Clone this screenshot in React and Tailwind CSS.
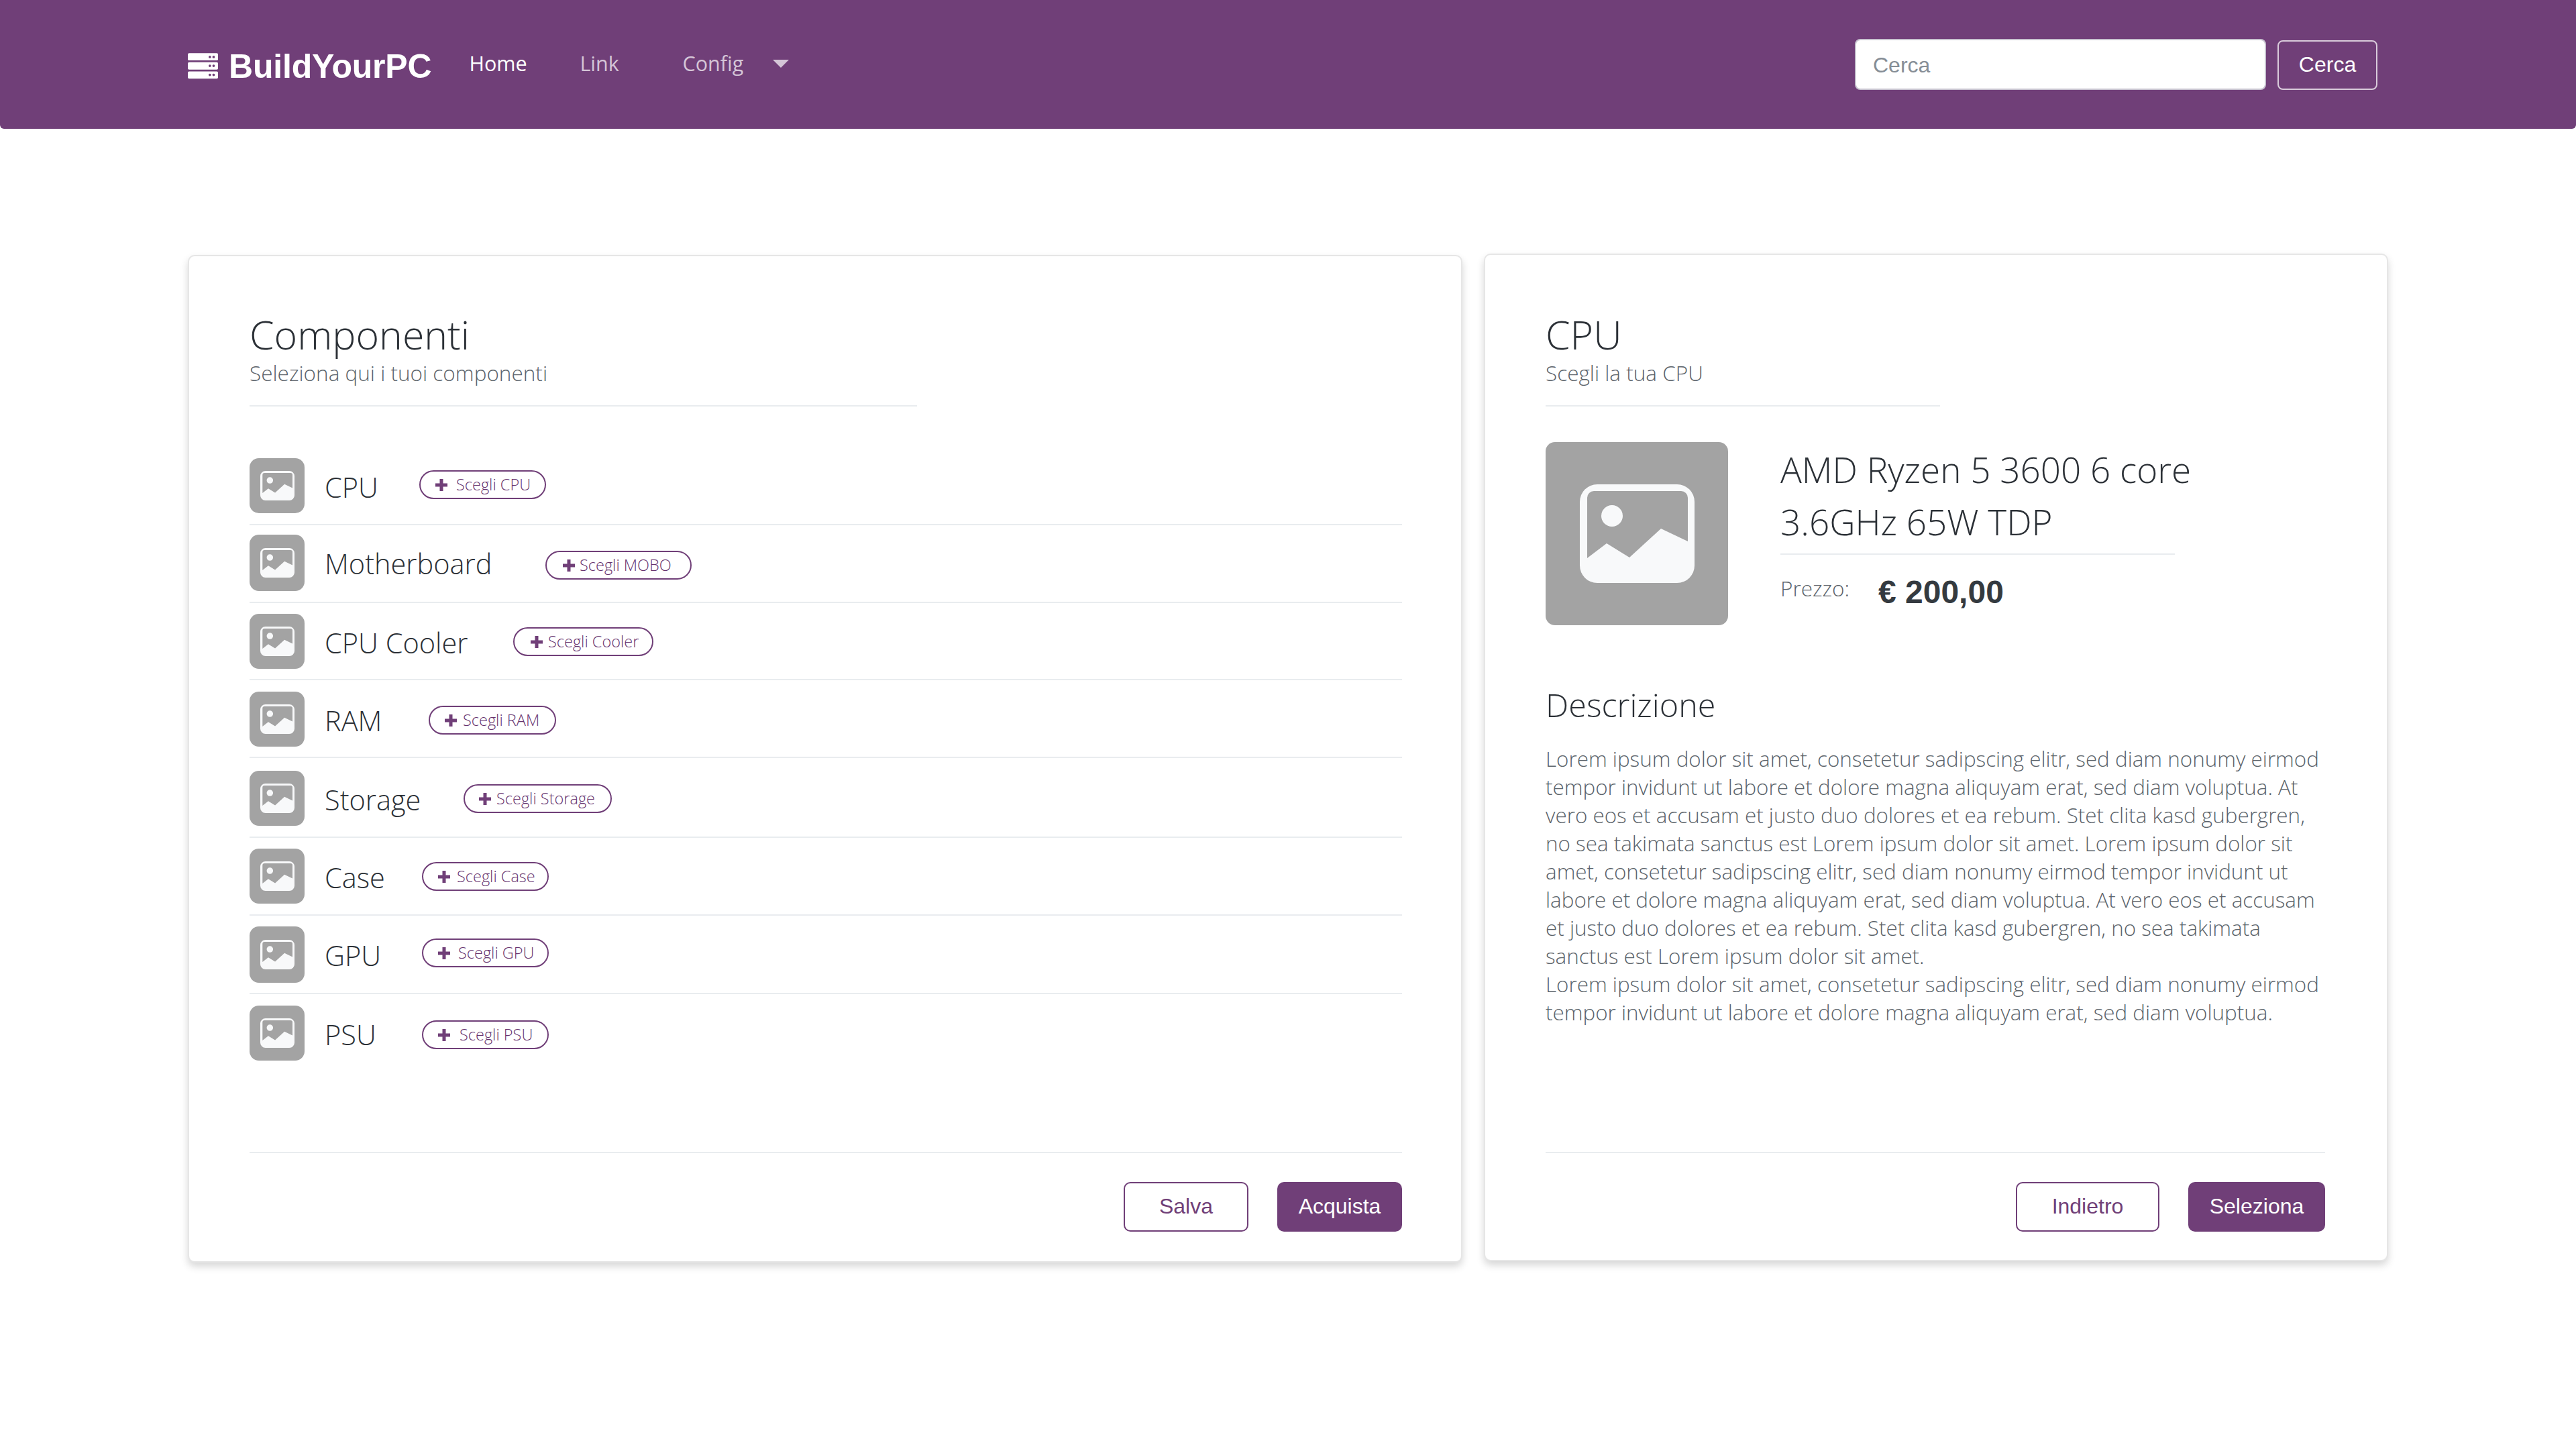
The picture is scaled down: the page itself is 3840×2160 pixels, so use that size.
const sans = "font-['Open_Sans',sans-serif]";
const arial = "font-['Liberation_Sans',sans-serif]";

function Pic({ className }) {
  return (
    <svg viewBox="0 0 171 147" className={className}>
      <path
        fill="#f8f9fa"
        fillRule="evenodd"
        d="M26 0H145A26 26 0 0 1 171 26V121A26 26 0 0 1 145 147H26A26 26 0 0 1 0 121V26A26 26 0 0 1 26 0ZM21 10A10 10 0 0 0 11 20V110L40 88L74 109L121 66L161 85V20A10 10 0 0 0 151 10Z"
      />
      <ellipse cx="48" cy="47" rx="16" ry="16" fill="#f8f9fa" />
    </svg>
  );
}

const rows = [
  { n: "CPU", b: "Scegli CPU", nw: "w-[141px]", bw: "w-[189px]", box: "h-[100px] mb-[14px]", th: "h-[82px]", bt: "mt-[18px]", pl: "pl-[21px]", g: "gap-[12px]" },
  { n: "Motherboard", b: "Scegli MOBO", nw: "w-[329px]", bw: "w-[218px]", box: "h-[102px] mb-[16px]", th: "h-[84px]", bt: "mt-[24px]", pl: "pl-[23px]", g: "gap-[6px]" },
  { n: "CPU Cooler", b: "Scegli Cooler", nw: "w-[281px]", bw: "w-[209px]", box: "h-[99px] mb-[17px]", th: "h-[82px]", bt: "mt-[20px]", pl: "pl-[23px]", g: "gap-[7px]" },
  { n: "RAM", b: "Scegli RAM", nw: "w-[155px]", bw: "w-[190px]", box: "h-[99px] mb-[19px]", th: "h-[82px]", bt: "mt-[21px]", pl: "pl-[21px]", g: "gap-[8px]" },
  { n: "Storage", b: "Scegli Storage", nw: "w-[207px]", bw: "w-[221px]", box: "h-[100px] mb-[16px]", th: "h-[82px]", bt: "mt-[20px]", pl: "pl-[20px]", g: "gap-[7px]" },
  { n: "Case", b: "Scegli Case", nw: "w-[145px]", bw: "w-[189px]", box: "h-[100px] mb-[16px]", th: "h-[82px]", bt: "mt-[20px]", pl: "pl-[21px]", g: "gap-[9px]" },
  { n: "GPU", b: "Scegli GPU", nw: "w-[145px]", bw: "w-[189px]", box: "h-[101px] mb-[17px]", th: "h-[84px]", bt: "mt-[18px]", pl: "pl-[21px]", g: "gap-[11px]" },
  { n: "PSU", b: "Scegli PSU", nw: "w-[145px]", bw: "w-[189px]", box: "h-[82px]", th: "h-[82px]", bt: "mt-[22px]", pl: "pl-[21px]", g: "gap-[13px]" },
];

const lines = [
  "Lorem ipsum dolor sit amet, consetetur sadipscing elitr, sed diam nonumy eirmod",
  "tempor invidunt ut labore et dolore magna aliquyam erat, sed diam voluptua. At",
  "vero eos et accusam et justo duo dolores et ea rebum. Stet clita kasd gubergren,",
  "no sea takimata sanctus est Lorem ipsum dolor sit amet. Lorem ipsum dolor sit",
  "amet, consetetur sadipscing elitr, sed diam nonumy eirmod tempor invidunt ut",
  "labore et dolore magna aliquyam erat, sed diam voluptua. At vero eos et accusam",
  "et justo duo dolores et ea rebum. Stet clita kasd gubergren, no sea takimata",
  "sanctus est Lorem ipsum dolor sit amet.",
  "Lorem ipsum dolor sit amet, consetetur sadipscing elitr, sed diam nonumy eirmod",
  "tempor invidunt ut labore et dolore magna aliquyam erat, sed diam voluptua.",
];

function Footer({ a, b, aw, bw }) {
  return (
    <div className="mt-auto border-t-[2px] border-[#e9ecef] pt-[43px] flex justify-end gap-[43px]">
      <button className={`${arial} ${aw} h-[74px] pb-[2px] rounded-[10px] border-[2px] border-[#703f78] text-[#703f78] text-[32px] bg-white`}>{a}</button>
      <button className={`${arial} ${bw} h-[74px] pb-[2px] rounded-[10px] bg-[#703f78] text-white text-[32px]`}>{b}</button>
    </div>
  );
}

export default function App() {
  return (
    <div className={`min-h-[2160px] bg-white ${sans}`}>
      <nav className="h-[192px] bg-[#703f78] rounded-b-[6px] flex items-center pl-[280px] pr-[296px]">
        <svg viewBox="0 0 48 40" className="w-[45px] h-[40px] mt-[4px]">
          <g fill="#fff">
            <rect x="0" y="0" width="48" height="11.5" rx="2" />
            <rect x="0" y="14.5" width="48" height="11.5" rx="2" />
            <rect x="0" y="29" width="48" height="11.5" rx="2" />
          </g>
          <g fill="#703f78">
            <circle cx="35" cy="6" r="2" /><circle cx="41" cy="6" r="2" />
            <circle cx="35" cy="20" r="2" /><circle cx="41" cy="20" r="2" />
            <circle cx="35" cy="34.5" r="2" /><circle cx="41" cy="34.5" r="2" />
          </g>
        </svg>
        <span className={`${arial} ml-[16px] text-[50px] font-bold text-white leading-none mt-[6px] tracking-[-0.2px]`}>BuildYourPC</span>
        <div className="ml-[56px] flex items-center text-[30.5px] font-normal mb-[2px]">
          <span className="text-white w-[165px]">Home</span>
          <span className="text-[#d4c5d7] w-[153px]">Link</span>
          <span className="text-[#d4c5d7]">Config</span>
          <span className="ml-[44px] w-0 h-0 border-x-[12px] border-x-transparent border-t-[12px] border-t-[#d4c5d7]"></span>
        </div>
        <div className="ml-auto flex items-end gap-[17px]">
          <div className={`${arial} w-[613px] h-[76px] bg-white rounded-[8px] border-[2px] border-[#c8c4d0] pl-[25px] pt-[2px] flex items-center text-[32px] text-[#868e96]`}>Cerca</div>
          <button className={`${arial} w-[149px] h-[74px] pb-[2px] rounded-[8px] border-[2px] border-[#d9ccdb] text-white text-[32px]`}>Cerca</button>
        </div>
      </nav>

      <main className="pl-[280px] pt-[186px] flex items-start gap-[32px]">
        <section className="w-[1900px] h-[1502px] mt-[2px] rounded-[10px] border-[2px] border-[#e6e6e6] bg-white shadow-[0_6px_12px_rgba(0,0,0,0.16)] pt-[79px] pl-[90px] pr-[88px] pb-[44px] flex flex-col">
          <h1 className="text-[59px] font-light leading-[74px] text-[#2b3036]">Componenti</h1>
          <p className="text-[31.5px] leading-[42px] font-light text-[#5c646b] border-b-[2px] border-[#e9ecef] w-[995px] pb-[27px]">Seleziona qui i tuoi componenti</p>
          <div className="mt-[77px]">
            {rows.map((r, i) => (
              <div key={r.n} className={`${r.box} flex items-start ${i < 7 ? "border-b-[2px] border-[#e9ecef]" : ""}`}>
                <div className={`w-[82px] ${r.th} rounded-[14px] bg-[#a3a3a3] flex items-center justify-center shrink-0`}>
                  <Pic className="w-[51px] h-[44px]" />
                </div>
                <span className={`ml-[30px] ${r.nw} shrink-0 text-[41.5px] font-light leading-[86px] text-[#2b3036]`}>{r.n}</span>
                <span className={`${r.bw} ${r.bt} ${r.pl} ${r.g} h-[43px] rounded-full border-[2px] border-[#703f78] flex items-center text-[#66336e] text-[23.5px] font-light`}>
                  <svg viewBox="0 0 20 20" className="w-[20px] h-[20px] shrink-0">
                    <path d="M10 1V19M1 10H19" stroke="#703f78" strokeWidth="5" fill="none" />
                  </svg>
                  <span className="whitespace-nowrap">{r.b}</span>
                </span>
              </div>
            ))}
          </div>
          <Footer a="Salva" b="Acquista" aw="w-[186px]" bw="w-[186px]" />
        </section>

        <section className="w-[1348px] h-[1502px] rounded-[10px] border-[2px] border-[#e6e6e6] bg-white shadow-[0_6px_12px_rgba(0,0,0,0.16)] pt-[81px] pl-[90px] pr-[92px] pb-[42px] flex flex-col">
          <h1 className="text-[59px] font-light leading-[74px] text-[#2b3036]">CPU</h1>
          <p className="text-[31.5px] leading-[42px] font-light text-[#5c646b] border-b-[2px] border-[#e9ecef] w-[588px] pb-[27px]">Scegli la tua CPU</p>
          <div className="mt-[53px] flex">
            <div className="w-[272px] h-[273px] rounded-[14px] bg-[#a3a3a3] flex items-center justify-center">
              <Pic className="w-[171px] h-[147px]" />
            </div>
            <div className="ml-[78px] w-[800px]">
              <div className="text-[53px] font-light leading-[78px] text-[#2b3036] border-b-[2px] border-[#e9ecef] w-[588px] whitespace-nowrap pt-[2px] pb-[8px]">AMD Ryzen 5 3600 6 core<br />3.6GHz 65W TDP</div>
              <div className="flex items-center mt-[20px]">
                <span className="text-[31.5px] font-light text-[#5c646b] w-[146px] mb-[12px]">Prezzo:</span>
                <span className={`${arial} text-[48px] font-bold text-[#343a40]`}>€ 200,00</span>
              </div>
            </div>
          </div>
          <h2 className="mt-[88px] text-[48.5px] font-light leading-[60px] text-[#2b3036]">Descrizione</h2>
          <p className="mt-[30px] text-[31.4px] leading-[42px] font-light text-[#5c646b] whitespace-nowrap">
            {lines.map((l) => (<span key={l} className="block">{l}</span>))}
          </p>
          <Footer a="Indietro" b="Seleziona" aw="w-[214px]" bw="w-[204px]" />
        </section>
      </main>
    </div>
  );
}
